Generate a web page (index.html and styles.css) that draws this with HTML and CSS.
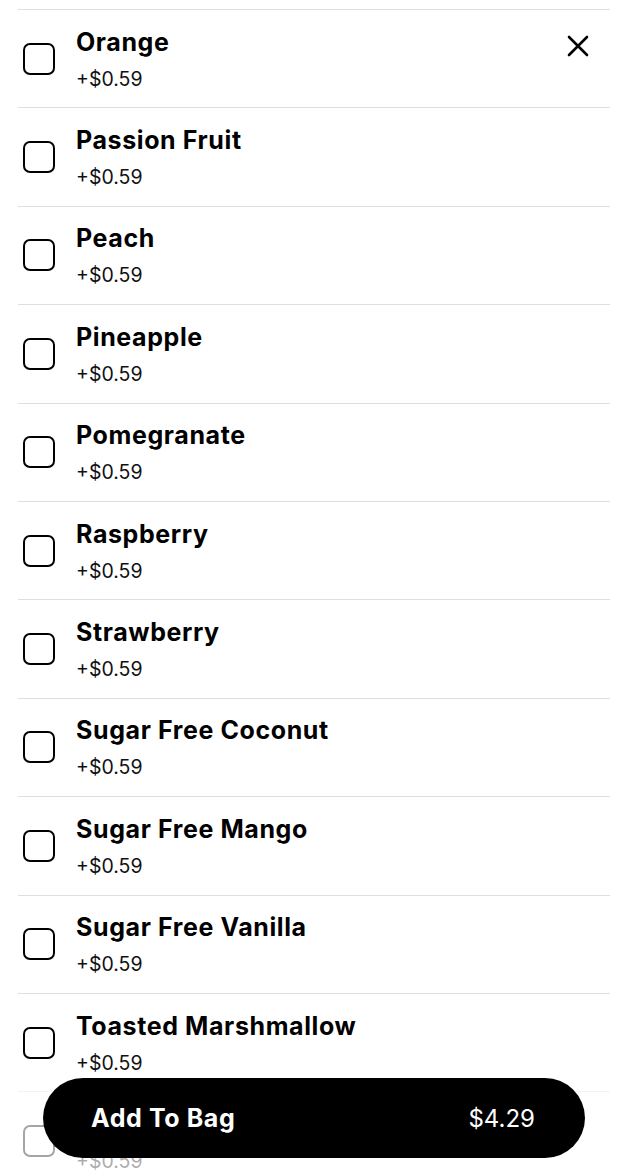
FILE: index.html
```html
<!DOCTYPE html>
<html>
<head>
<meta charset="utf-8">
<link rel="stylesheet" href="styles.css">
</head>
<body>
<div class="sheet">
  <button class="close" aria-label="Close">
    <svg width="24" height="24" viewBox="0 0 24 24"><path d="M3 3L21 21M21 3L3 21" stroke="#000" stroke-width="2.6" stroke-linecap="round" fill="none"/></svg>
  </button>
  <ul class="list">
    <li class="row"><span class="box"></span><div class="txt"><div class="name">Orange</div><div class="price">+$0.59</div></div></li>
    <li class="row"><span class="box"></span><div class="txt"><div class="name">Passion Fruit</div><div class="price">+$0.59</div></div></li>
    <li class="row"><span class="box"></span><div class="txt"><div class="name">Peach</div><div class="price">+$0.59</div></div></li>
    <li class="row"><span class="box"></span><div class="txt"><div class="name">Pineapple</div><div class="price">+$0.59</div></div></li>
    <li class="row"><span class="box"></span><div class="txt"><div class="name">Pomegranate</div><div class="price">+$0.59</div></div></li>
    <li class="row"><span class="box"></span><div class="txt"><div class="name">Raspberry</div><div class="price">+$0.59</div></div></li>
    <li class="row"><span class="box"></span><div class="txt"><div class="name">Strawberry</div><div class="price">+$0.59</div></div></li>
    <li class="row"><span class="box"></span><div class="txt"><div class="name">Sugar Free Coconut</div><div class="price">+$0.59</div></div></li>
    <li class="row"><span class="box"></span><div class="txt"><div class="name">Sugar Free Mango</div><div class="price">+$0.59</div></div></li>
    <li class="row"><span class="box"></span><div class="txt"><div class="name">Sugar Free Vanilla</div><div class="price">+$0.59</div></div></li>
    <li class="row"><span class="box"></span><div class="txt"><div class="name">Toasted Marshmallow</div><div class="price">+$0.59</div></div></li>
    <li class="row faded"><span class="box"></span><div class="txt"><div class="name hidden">Vanilla</div><div class="price">+$0.59</div></div></li>
  </ul>
  <div class="footer">
    <button class="bag"><span class="bag-label">Add To Bag</span><span class="bag-total">$4.29</span></button>
  </div>
</div>
</body>
</html>
```
FILE: styles.css
```css
html, body {
  margin: 0;
  padding: 0;
  background: #fff;
  overflow: hidden;
}
body {
  font-family: "Inter", "Liberation Sans", sans-serif;
  color: #000;
  width: 628px;
  height: 1176px;
}
.sheet {
  position: relative;
  height: 1176px;
  overflow: hidden;
}
.close {
  position: absolute;
  top: 34px;
  left: 566px;
  width: 24px;
  height: 24px;
  padding: 0;
  border: 0;
  background: none;
  display: flex;
}
.list {
  list-style: none;
  margin: 0;
  padding: 9px 18px 0;
}
.row {
  box-sizing: border-box;
  height: 98.4px;
  border-top: 1px solid #dedede;
  display: flex;
  align-items: center;
  padding-left: 5px;
  gap: 21px;
}
.box {
  box-sizing: border-box;
  width: 32px;
  height: 32px;
  border: 2.6px solid #000;
  border-radius: 7px;
  flex: none;
}
.txt {
  display: flex;
  flex-direction: column;
  gap: 11px;
  padding-top: 1px;
}
.name {
  font-size: 25px;
  font-weight: 700;
  line-height: 28px;
  letter-spacing: 0.6px;
}
.hidden {
  visibility: hidden;
}
.price {
  font-size: 19.5px;
  font-weight: 400;
  line-height: 24px;
  color: #111;
}
.faded {
  opacity: 0.35;
}
.footer {
  position: absolute;
  left: 0;
  right: 0;
  bottom: 0;
  height: 110px;
  display: flex;
  justify-content: center;
  padding-top: 12px;
  box-sizing: border-box;
}
.bag {
  width: 542px;
  height: 80px;
  border: 0;
  border-radius: 40px;
  background: #000;
  color: #fff;
  display: flex;
  align-items: center;
  justify-content: space-between;
  padding: 0 50px 0 48px;
  font-family: "Inter", "Liberation Sans", sans-serif;
}
.bag-label {
  font-size: 25px;
  font-weight: 700;
  letter-spacing: 0.6px;
}
.bag-total {
  font-size: 24px;
  font-weight: 400;
}
```
